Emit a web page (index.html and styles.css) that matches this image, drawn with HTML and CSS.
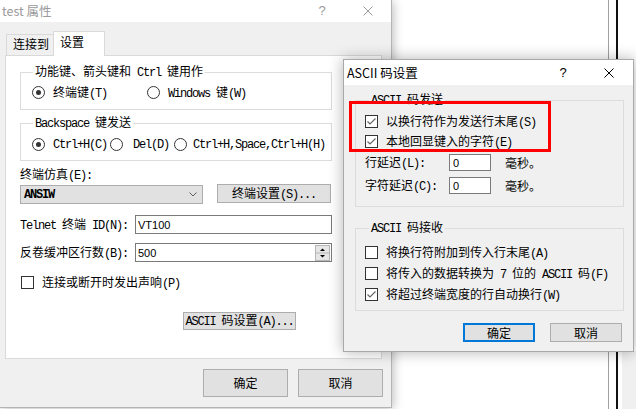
FILE: index.html
```html
<!DOCTYPE html>
<html lang="zh-CN">
<head>
<meta charset="utf-8">
<title>test 属性</title>
<link rel="stylesheet" href="styles.css">
</head>
<body>
<div class="desk">
  <div class="vline v1"></div>
  <div class="vline v2"></div>
  <div class="strip"></div>

  <section class="win back">
    <header class="tbar">
      <span class="ttl">test 属性</span>
      <span class="help">?</span>
      <svg class="close" width="10" height="10" viewBox="0 0 10 10"><path d="M0.5 0.5L9.5 9.5M9.5 0.5L0.5 9.5"/></svg>
    </header>
    <nav class="tabs">
      <div class="tab">连接到</div>
      <div class="tab on">设置</div>
    </nav>
    <div class="panel">
      <fieldset class="grp g1">
        <legend>功能键、箭头键和<span class="m"> Ctrl </span>键用作</legend>
        <div class="opts">
          <div class="opt"><i class="rb on"></i><span>终端键<span class="m">(T)</span></span></div>
          <div class="opt o-w"><i class="rb"></i><span><span class="m">Windows </span>键<span class="m">(W)</span></span></div>
        </div>
      </fieldset>
      <fieldset class="grp g2">
        <legend><span class="m">Backspace </span>键发送</legend>
        <div class="opts">
          <div class="opt"><i class="rb on"></i><span class="m">Ctrl+H(C)</span></div>
          <div class="opt o-d"><i class="rb"></i><span class="m">Del(D)</span></div>
          <div class="opt o-c"><i class="rb"></i><span class="m">Ctrl+H,Space,Ctrl+H(H)</span></div>
        </div>
      </fieldset>
      <div class="lbl">终端仿真<span class="m">(E):</span></div>
      <div class="combo-row">
        <div class="combo"><span class="m b">ANSIW</span><svg class="chev" width="8" height="5" viewBox="0 0 8 5"><path d="M0.5 0.5L4 4L7.5 0.5"/></svg></div>
        <div class="btn setbtn"><span>终端设置<span class="m">(S)...</span></span></div>
      </div>
      <div class="field-row r-id">
        <span class="flbl"><span class="m">Telnet </span>终端<span class="m"> ID(N):</span></span>
        <div class="input"><span class="val">VT100</span></div>
      </div>
      <div class="field-row r-buf">
        <span class="flbl">反卷缓冲区行数<span class="m">(B):</span></span>
        <div class="input"><span class="val">500</span><svg class="spin" width="15" height="16" viewBox="0 0 15 16"><rect x="0.5" y="0.5" width="14" height="15" fill="#e6e6e6" stroke="#b5b5b5"/><line x1="1" y1="8" x2="14" y2="8" stroke="#b5b5b5"/><path d="M5 6H10L7.5 3.5Z" fill="#000"/><path d="M5 10H10L7.5 12.5Z" fill="#000"/></svg></div>
      </div>
      <div class="chk-row"><i class="cb"></i><span>连接或断开时发出声响<span class="m">(P)</span></span></div>
      <div class="btn asciibtn"><span><span class="m">ASCII </span>码设置<span class="m">(A)...</span></span></div>
    </div>
    <footer class="btns">
      <div class="btn big">确定</div>
      <div class="btn big">取消</div>
    </footer>
  </section>

  <section class="win front">
    <header class="tbar">
      <span class="ttl">ASCII 码设置</span>
      <span class="help">?</span>
      <svg class="close" width="10" height="10" viewBox="0 0 10 10"><path d="M0.5 0.5L9.5 9.5M9.5 0.5L0.5 9.5"/></svg>
    </header>
    <div class="body">
      <fieldset class="grp fg1">
        <legend><span class="m">ASCII </span>码发送</legend>
        <div class="crow"><i class="cb"><svg width="11" height="11" viewBox="0 0 11 11"><path d="M1.5 5.5L4 8L9.5 2.5"/></svg></i><span>以换行符作为发送行末尾<span class="m">(S)</span></span></div>
        <div class="crow"><i class="cb"><svg width="11" height="11" viewBox="0 0 11 11"><path d="M1.5 5.5L4 8L9.5 2.5"/></svg></i><span>本地回显键入的字符<span class="m">(E)</span></span></div>
        <div class="irow"><span class="ilbl">行延迟<span class="m">(L):</span></span><div class="finput">0</div><span class="ms">毫秒。</span></div>
        <div class="irow"><span class="ilbl">字符延迟<span class="m">(C):</span></span><div class="finput">0</div><span class="ms">毫秒。</span></div>
      </fieldset>
      <fieldset class="grp fg2">
        <legend><span class="m">ASCII </span>码接收</legend>
        <div class="crow"><i class="cb"></i><span>将换行符附加到传入行末尾<span class="m">(A)</span></span></div>
        <div class="crow"><i class="cb"></i><span>将传入的数据转换为<span class="m"> 7 </span>位的<span class="m"> ASCII </span>码<span class="m">(F)</span></span></div>
        <div class="crow"><i class="cb"><svg width="11" height="11" viewBox="0 0 11 11"><path d="M1.5 5.5L4 8L9.5 2.5"/></svg></i><span>将超过终端宽度的行自动换行<span class="m">(W)</span></span></div>
      </fieldset>
      <div class="fbtns">
        <div class="btn def">确定</div>
        <div class="btn">取消</div>
      </div>
    </div>
  </section>

  <div class="hl"></div>
</div>
</body>
</html>
```

FILE: styles.css
```css
* { box-sizing: border-box; margin: 0; padding: 0; }
html, body { width: 636px; height: 409px; overflow: hidden; background: #fff; }
body {
  font-family: "Noto Sans CJK SC", "Liberation Sans", sans-serif;
  font-size: 12px;
  line-height: 14px;
  color: #000;
  white-space: nowrap;
}
i { font-style: normal; }
.desk { position: relative; width: 636px; height: 409px; overflow: hidden; background: #fff; }
.m { font-family: "Liberation Mono", "Noto Sans CJK SC", monospace; letter-spacing: -1.2px; }
.b { font-weight: bold; }

/* desktop decorations */
.vline { position: absolute; top: 0; height: 409px; }
.v1 { left: 608px; width: 1px; background: #a0a0a0; }
.v2 { left: 616px; width: 2px; background: #111; }
.strip { position: absolute; left: 622px; top: 351px; width: 14px; height: 58px; background: #f0f0f0; }

/* windows */
.win { position: absolute; background: #f0f0f0; display: flex; flex-direction: column; }
.tbar { flex: none; display: flex; align-items: center; background: #fff; }
.ttl { flex: 1; }
.help { width: 10px; text-align: center; font-family: "Liberation Sans", sans-serif; font-size: 13px; }
.close { margin-left: 36px; fill: none; stroke-width: 1; }

.back {
  left: 0; top: 0; width: 392px; height: 408px;
  border-right: 1px solid #b4b4b4; border-bottom: 1px solid #b4b4b4;
  box-shadow: 1px 1px 10px rgba(0, 0, 0, .28);
}
.back .tbar { height: 22px; padding: 0 18px 0 2px; color: #9a9a9a; }
.back .ttl { font-size: 12.5px; }
.back .close { stroke: #9a9a9a; }

.tabs { flex: none; display: flex; align-items: flex-end; height: 24px; margin-top: 9px; padding-left: 6px; }
.tab {
  height: 21px; width: 47px; padding: 2px 0 0 6px;
  border: 1px solid #d9d9d9; border-bottom: none; border-right: none; background: #f0f0f0;
}
.tab.on {
  height: 25px; width: 52px; padding: 3px 0 0 6px; background: #fff;
  border-right: 1px solid #d9d9d9; margin-bottom: -1px; position: relative; z-index: 1;
}
.panel {
  flex: none; margin-left: 5px; width: 377px; height: 304px;
  background: #fff; border: 1px solid #d9d9d9; padding: 0 49px 0 14px;
}

.grp { border: 1px solid #dcdcdc; min-width: 0; }
.grp legend { padding: 0 2px; line-height: 14px; }
.panel .grp { padding: 6px 0 10px 11px; }
.panel .grp legend { margin-left: 1px; }
.g1 { margin-top: 8px; }
.panel .g2 { margin-top: 5px; padding-top: 7px; padding-bottom: 9px; }
.opts { display: flex; align-items: center; height: 13px; }
.opt { display: flex; align-items: center; }
.rb {
  display: flex; align-items: center; justify-content: center; flex: none;
  width: 13px; height: 13px; border: 1px solid #333; border-radius: 50%; background: #fff; margin-right: 8px;
}
.rb.on::after { content: ""; width: 5px; height: 5px; border-radius: 50%; background: #333; }
.o-w { margin-left: 40px; }
.o-d { margin-left: 3px; }
.o-d .rb { margin-right: 10px; }
.o-c { margin-left: 5px; }
.o-c .rb { margin-right: 6px; }

.lbl { margin-top: 6px; }
.combo-row { display: flex; justify-content: space-between; margin-top: 1px; height: 20px; width: 312px; }
.combo {
  width: 183px; height: 19px; margin-top: 1px; background: #e1e1e1; border: 1px solid #adadad;
  display: flex; align-items: center; padding-left: 3px;
}
.combo .m { flex: 1; }
.chev { margin-right: 5px; fill: none; stroke: #606060; }
.btn {
  display: flex; align-items: center; justify-content: center;
  background: #e1e1e1; border: 1px solid #adadad;
}
.setbtn { width: 114px; height: 19px; margin-right: 1px; }

.field-row { display: flex; align-items: center; width: 312px; height: 19px; }
.flbl { flex: 1; }
.input {
  width: 197px; height: 19px; background: #fff; border: 1px solid #7a7a7a;
  display: flex; align-items: center; padding-left: 2px;
  font-family: "Liberation Sans", sans-serif; font-size: 11px;
}
.val { flex: 1; }
.spin { margin-right: 1px; }
.r-id { margin-top: 11px; }
.r-buf { margin-top: 9px; }

.chk-row { display: flex; align-items: center; height: 13px; margin-top: 14px; margin-left: 1px; }
.cb {
  display: flex; align-items: center; justify-content: center; flex: none;
  width: 13px; height: 13px; border: 1px solid #333; background: #fff; margin-right: 8px;
}
.cb svg { fill: none; stroke: #666; stroke-width: 1.2; }
.asciibtn { width: 113px; height: 18px; margin: 23px 0 0 163px; }

.btns { flex: none; display: flex; justify-content: flex-end; gap: 10px; margin-top: 10px; padding-right: 8px; }
.big { width: 85px; height: 28px; }

/* front dialog */
.front {
  left: 343px; top: 59px; width: 291px; height: 293px;
  border: 1px solid #a9a9a9; box-shadow: 0 0 14px rgba(0, 0, 0, .3);
}
.front .tbar { height: 25px; padding: 0 19px 0 3px; }
.front .ttl { font-size: 12.5px; }
.front .close { stroke: #000; }
.front .body { padding: 0 9px 0 11px; }
.front .grp legend { margin-left: 4px; }
.fg1 { margin-top: 7px; padding: 7px 0 12px 9px; }
.crow { display: flex; align-items: center; height: 13px; }
.fg1 .crow + .crow { margin-top: 7px; }
.irow { display: flex; align-items: center; height: 17px; margin-top: 6px; }
.ilbl { width: 84px; }
.finput {
  width: 42px; height: 17px; border: 1px solid #7a7a7a; background: #fff; padding-left: 3px;
  display: flex; align-items: center; font-family: "Liberation Sans", sans-serif; font-size: 11px;
}
.ms { margin-left: 14px; }
.fg2 { margin-top: 13px; padding: 10px 0 9px 9px; }
.fg2 .crow + .crow { margin-top: 8px; }
.fbtns { display: flex; justify-content: flex-end; gap: 15px; margin: 12px 2px 0 0; }
.fbtns .btn { width: 72px; height: 19px; }
.fbtns .def { border: 2px solid #0078d7; }

.hl { position: absolute; left: 349px; top: 101px; width: 202px; height: 51px; border: 3px solid #f00; }
```
